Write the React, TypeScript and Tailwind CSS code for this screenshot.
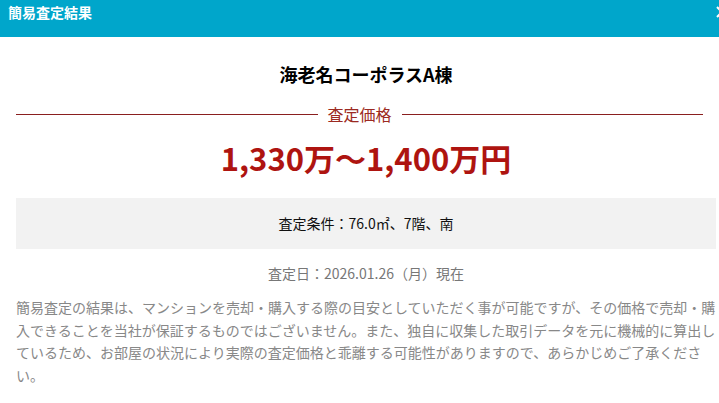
export default function App() {
  const font = { fontFamily: '"Noto Sans CJK JP", "Noto Sans", sans-serif' };
  return (
    <div className="w-[719px] h-[403px] overflow-hidden bg-white" style={font}>
      <div className="relative h-[37px] bg-[#00a6cb] px-2 pt-[2px]">
        <h2 className="text-[14px] font-bold leading-[20px] text-white">簡易査定結果</h2>
        <svg className="absolute right-[-10px] top-[5px]" width="14" height="14" viewBox="0 0 14 14">
          <path d="M2 2 L12 12 M12 2 L2 12" stroke="white" strokeWidth="2" />
        </svg>
      </div>

      <div className="pl-4 pr-[3px]">
        <h1 className="mt-[24px] text-center text-[18px] font-bold leading-[26px] text-black">
          海老名コーポラスA棟
        </h1>

        <div className="mt-[16px] mr-[13px] flex items-center gap-[10px]">
          <div className="h-px flex-1 bg-[#8a1f1f]" />
          <span className="text-[16px] leading-[22px] text-[#9c2a22]">査定価格</span>
          <div className="h-px flex-1 bg-[#8a1f1f]" />
        </div>

        <p className="mt-[11px] text-center text-[31px] font-bold leading-[44px] text-[#ae1410]">
          1,330万～1,400万円
        </p>

        <div className="mt-[18px] flex h-[51px] items-center justify-center bg-[#f2f2f2]">
          <span className="text-[14px] text-[#111]">査定条件：76.0㎡、7階、南</span>
        </div>

        <p className="mt-[13px] text-center text-[14px] leading-[22px] text-[#777]">
          査定日：2026.01.26（月）現在
        </p>

        <p className="mt-[12px] w-[700px] text-[14px] leading-[22.6px] text-[#888]">
          簡易査定の結果は、マンションを売却・購入する際の目安としていただく事が可能ですが、その価格で売却・購入できることを当社が保証するものではございません。また、独自に収集した取引データを元に機械的に算出しているため、お部屋の状況により実際の査定価格と乖離する可能性がありますので、あらかじめご了承ください。
        </p>
      </div>
    </div>
  );
}
